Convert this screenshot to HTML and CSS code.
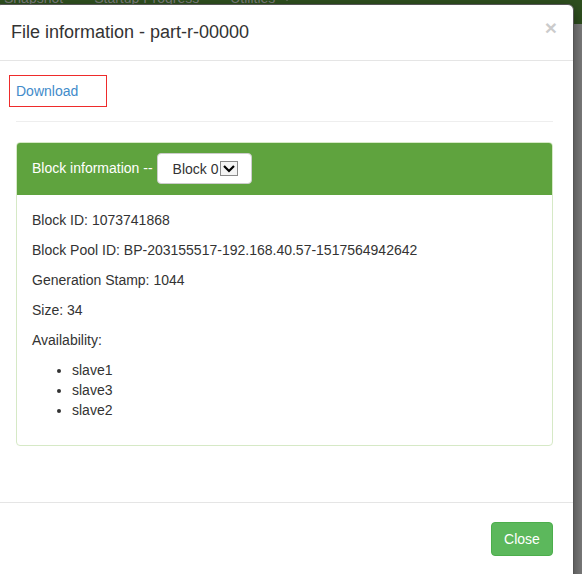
FILE: index.html
```html
<!DOCTYPE html>
<html>
<head>
<meta charset="utf-8">
<title>File information</title>
<link rel="stylesheet" href="styles.css">
</head>
<body>
<div class="page">
  <nav class="navbar">
    <a class="nav-link nav-first">Snapshot</a>
    <a class="nav-link">Startup Progress</a>
    <a class="nav-link">Utilities <span class="caret"></span></a>
  </nav>
</div>
<div class="modal">
  <div class="modal-header">
    <span class="close">×</span>
    <h4 class="modal-title">File information - part-r-00000</h4>
  </div>
  <div class="modal-body">
    <div class="download-line">
      <a class="download">Download</a>
      <span class="highlight"></span>
    </div>
    <hr class="divider">
    <div class="panel">
      <div class="panel-heading">
        <span>Block information --</span>
        <div class="block-select">
          <span>Block 0</span>
          <span class="select-arrow">
            <svg width="16" height="13" viewBox="0 0 16 13"><polyline points="3,4 8,9 13,4" fill="none" stroke="#000" stroke-width="2.2"/></svg>
          </span>
        </div>
      </div>
      <div class="panel-body">
        <p>Block ID: 1073741868</p>
        <p>Block Pool ID: BP-203155517-192.168.40.57-1517564942642</p>
        <p>Generation Stamp: 1044</p>
        <p>Size: 34</p>
        <p>Availability:</p>
        <ul class="nodes">
          <li>slave1</li>
          <li>slave3</li>
          <li>slave2</li>
        </ul>
      </div>
    </div>
  </div>
  <div class="modal-footer">
    <button class="btn-close">Close</button>
  </div>
</div>
</body>
</html>
```

FILE: styles.css
```css
html, body {
  margin: 0;
  padding: 0;
  height: 100%;
  overflow: hidden;
}
body {
  background: #7f7f7f;
  font-family: "Liberation Sans", Arial, sans-serif;
  font-size: 14px;
  line-height: 20px;
  color: #333;
}
.page {
  height: 100%;
}
.navbar {
  height: 24px;
  background: #2f501f;
  display: flex;
  overflow: hidden;
}
.nav-link {
  color: #7d7d7d;
  margin-top: -12px;
  margin-left: 31px;
  line-height: 20px;
  white-space: nowrap;
}
.nav-first {
  margin-left: 4px;
}
.caret {
  display: inline-block;
  width: 0;
  height: 0;
  margin-left: 4px;
  border-top: 4px solid #7d7d7d;
  border-left: 4px solid transparent;
  border-right: 4px solid transparent;
  vertical-align: middle;
}
.modal {
  position: absolute;
  left: -5px;
  top: 4px;
  width: 579px;
  box-sizing: border-box;
  background: #fff;
  border: 1px solid #555;
  border-radius: 6px;
  box-shadow: 0 5px 15px rgba(0,0,0,.5);
  height: 600px;
}
.modal-header {
  padding: 15px;
  border-bottom: 1px solid #e5e5e5;
}
.modal-title {
  margin: 0;
  font-size: 18px;
  font-weight: normal;
  line-height: 25px;
}
.close {
  float: right;
  font-size: 21px;
  font-weight: bold;
  line-height: 1;
  color: #000;
  opacity: .2;
  margin-top: -3px;
  margin-right: 1px;
}
.modal-body {
  padding: 20px 20px 16px 20px;
}
.download-line {
  height: 20px;
  position: relative;
}
.download {
  color: #428bca;
}
.highlight {
  position: absolute;
  left: -7px;
  top: -6px;
  width: 98px;
  height: 32px;
  box-sizing: border-box;
  border: 1px solid #ee2b2b;
}
.divider {
  margin: 20px 0;
  border: 0;
  border-top: 1px solid #eee;
}
.panel {
  border: 1px solid #d6e9c6;
  border-radius: 4px;
  margin-bottom: 40px;
  overflow: hidden;
}
.panel-heading {
  background: #5fa33e;
  color: #fff;
  padding: 10px 15px;
  display: flex;
  align-items: center;
  gap: 4px;
  border-bottom: 1px solid #5fa33e;
}
.panel-heading > span {
  margin-top: -2px;
}
.block-select {
  display: flex;
  align-items: center;
  height: 31px;
  box-sizing: border-box;
  width: 95px;
  padding: 0 0 0 15px;
  background: #fff;
  border: 1px solid #ccc;
  border-radius: 4px;
  color: #333;
}
.select-arrow {
  display: flex;
  align-items: center;
  justify-content: center;
  width: 18px;
  height: 15px;
  box-sizing: border-box;
  border: 1px solid #8a8a8a;
  margin-left: 1px;
  background: #f4f4f4;
}
.panel-body {
  padding: 15px;
}
.panel-body p {
  margin: 0 0 10px;
}
.nodes {
  margin: 0 0 10px;
  padding-left: 40px;
}
.modal-footer {
  border-top: 1px solid #e5e5e5;
  padding: 19px 20px 20px;
  display: flex;
  justify-content: flex-end;
}
.btn-close {
  font-family: "Liberation Sans", Arial, sans-serif;
  font-size: 14px;
  line-height: 20px;
  padding: 6px 12px;
  color: #fff;
  background: #5cb85c;
  border: 1px solid #4cae4c;
  border-radius: 4px;
  width: 62px;
}
```
